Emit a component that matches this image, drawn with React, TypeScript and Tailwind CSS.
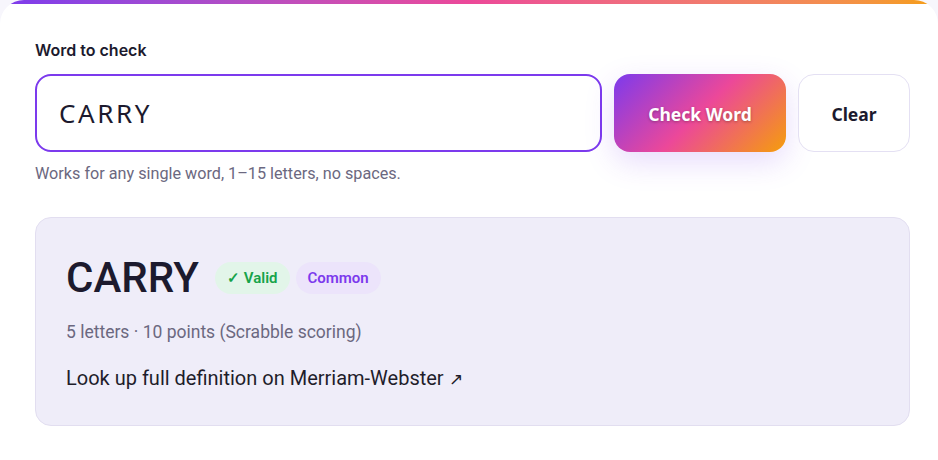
import React, { useState } from 'react';

const App: React.FC = () => {
  const [word, setWord] = useState('CARRY');

  return (
    <div className="min-h-screen bg-[#f7f6fc] font-['Roboto',sans-serif] text-[#1c1a2e]">
      <div className="w-full min-h-[480px] overflow-hidden rounded-t-[24px] bg-white">
        <div className="h-1 w-full bg-gradient-to-r from-[#7c3aed] via-[#ec4899] to-[#f59e0b]" />
        <div className="pl-[35px] pr-[28px] pt-9">
          <label className="mb-[14px] block font-['Inter',sans-serif] text-base font-semibold leading-5 text-[#1c1a2e]">
            Word to check
          </label>
          <div className="flex gap-3">
            <input
              value={word}
              onChange={(e) => setWord(e.target.value)}
              className="h-[78px] flex-1 rounded-2xl border-2 border-[#7c3aed] bg-white px-[22px] font-['Noto_Sans',sans-serif] text-[26px] tracking-[0.1em] text-[#1c1a2e] outline-none"
            />
            <button className="h-[78px] w-[172px] rounded-2xl bg-[linear-gradient(135deg,#7c3aed,#ec4899,#f59e0b)] pt-[3px] font-['Noto_Sans',sans-serif] text-[17.5px] font-bold text-white shadow-[0_10px_30px_rgba(124,58,237,0.18)] [text-shadow:0_1px_3px_rgba(0,0,0,0.3)]">
              Check Word
            </button>
            <button className="h-[78px] w-[112px] rounded-2xl border border-[#e4e0f3] bg-white pt-[3px] font-['Noto_Sans',sans-serif] text-[17.5px] font-bold text-[#1c1a2e]">
              Clear
            </button>
          </div>
          <p className="mt-3 text-[16.2px] leading-5 text-[#6b6880]">
            Works for any single word, 1–15 letters, no spaces.
          </p>

          <div className="mt-[33px] rounded-2xl border border-[#e2def0] bg-[#efedf9] px-[30px] pb-[32px] pt-[39px]">
            <div className="flex items-center gap-4">
              <h2 className="text-[42px] font-medium leading-none text-[#1c1a2e]">CARRY</h2>
              <div className="flex items-center gap-1.5">
                <span className="flex h-8 items-center rounded-full bg-[#e2f5e9] px-3 text-[15px] font-semibold text-[#16a34a]">
                  <span className="mr-1 font-bold">✓</span>Valid
                </span>
                <span className="flex h-8 items-center rounded-full bg-[#ece4fb] px-3 text-[15px] font-semibold text-[#7c3aed]">
                  Common
                </span>
              </div>
            </div>
            <p className="mt-[21px] text-[17.5px] leading-6 text-[#6b6880]">
              5 letters · 10 points (Scrabble scoring)
            </p>
            <a href="#" className="mt-5 block text-xl leading-7 text-[#1f1d2b]">
              Look up full definition on Merriam-Webster <span className="text-[17px]">↗</span>
            </a>
          </div>
        </div>
      </div>
    </div>
  );
};

export default App;
